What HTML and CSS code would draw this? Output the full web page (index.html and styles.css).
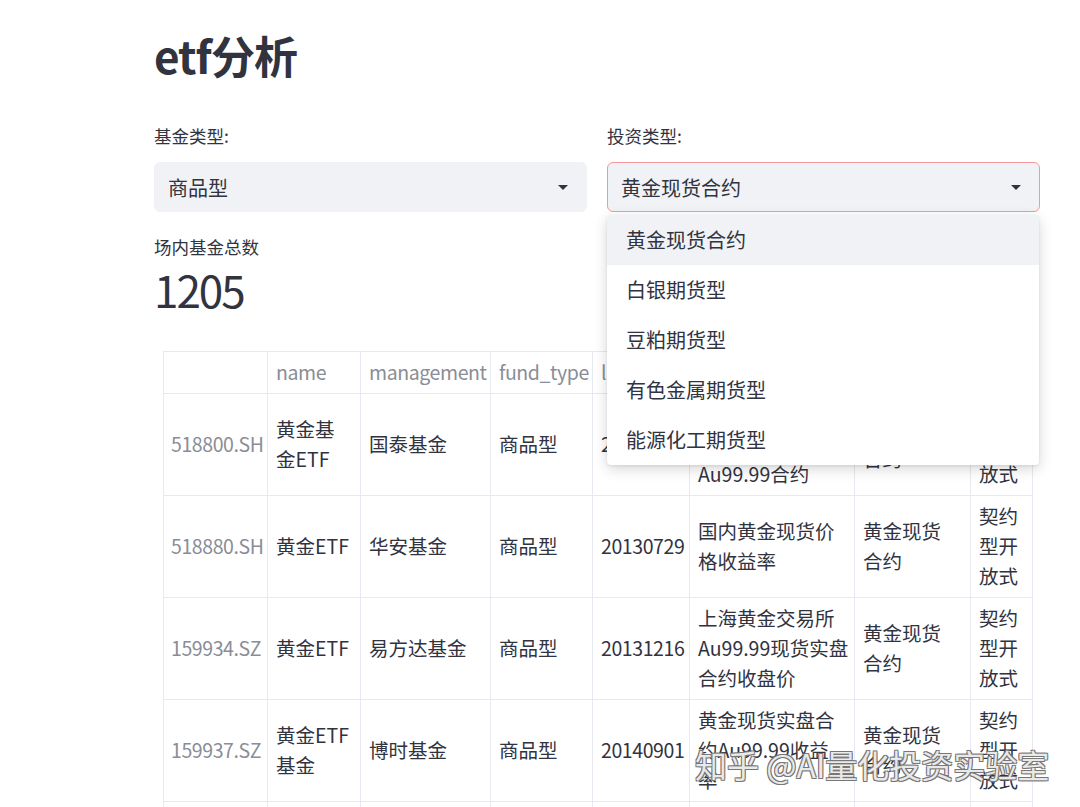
FILE: index.html
```html
<!DOCTYPE html>
<html lang="zh-CN">

<head>
    <meta charset="UTF-8">
    <meta name="viewport" content="width=device-width, initial-scale=1.0">
    <title>etf分析</title>
    <link rel="stylesheet" href="styles.css">
</head>

<body>
    <main class="page">
        <h1 class="title">etf分析</h1>

        <div class="filters">
            <div class="field">
                <label class="field-label">基金类型:</label>
                <div class="select">
                    <span>商品型</span>
                    <span class="caret"></span>
                </div>
            </div>
            <div class="field">
                <label class="field-label">投资类型:</label>
                <div class="select focused">
                    <span>黄金现货合约</span>
                    <span class="caret"></span>
                </div>
                <ul class="menu">
                    <li class="active">黄金现货合约</li>
                    <li>白银期货型</li>
                    <li>豆粕期货型</li>
                    <li>有色金属期货型</li>
                    <li>能源化工期货型</li>
                </ul>
            </div>
        </div>

        <div class="metric">
            <div class="metric-label">场内基金总数</div>
            <div class="metric-value">1205</div>
        </div>

        <table class="data">
            <colgroup>
                <col class="c-index">
                <col class="c-name">
                <col class="c-mgmt">
                <col class="c-ftype">
                <col class="c-date">
                <col class="c-bench">
                <col class="c-itype">
                <col class="c-type">
            </colgroup>
            <thead>
                <tr>
                    <th></th>
                    <th>name</th>
                    <th>management</th>
                    <th>fund_type</th>
                    <th>list_date</th>
                    <th>benchmark</th>
                    <th>invest_type</th>
                    <th>type</th>
                </tr>
            </thead>
            <tbody>
                <tr>
                    <th>518800.SH</th>
                    <td>黄金基<br>金ETF</td>
                    <td>国泰基金</td>
                    <td>商品型</td>
                    <td>20130729</td>
                    <td>上海黄金交易所<br>黄金现货实盘<br>Au99.99合约</td>
                    <td>黄金现货<br>合约</td>
                    <td>契约<br>型开<br>放式</td>
                </tr>
                <tr>
                    <th>518880.SH</th>
                    <td>黄金ETF</td>
                    <td>华安基金</td>
                    <td>商品型</td>
                    <td>20130729</td>
                    <td>国内黄金现货价<br>格收益率</td>
                    <td>黄金现货<br>合约</td>
                    <td>契约<br>型开<br>放式</td>
                </tr>
                <tr>
                    <th>159934.SZ</th>
                    <td>黄金ETF</td>
                    <td>易方达基金</td>
                    <td>商品型</td>
                    <td>20131216</td>
                    <td>上海黄金交易所<br>Au99.99现货实盘<br>合约收盘价</td>
                    <td>黄金现货<br>合约</td>
                    <td>契约<br>型开<br>放式</td>
                </tr>
                <tr>
                    <th>159937.SZ</th>
                    <td>黄金ETF<br>基金</td>
                    <td>博时基金</td>
                    <td>商品型</td>
                    <td>20140901</td>
                    <td>黄金现货实盘合<br>约Au99.99收益<br>率</td>
                    <td>黄金现货<br>合约</td>
                    <td>契约<br>型开<br>放式</td>
                </tr>
                <tr>
                    <th>159812.SZ</th>
                    <td>黄金基<br>金ETF</td>
                    <td>前海开源基金</td>
                    <td>商品型</td>
                    <td>20200410</td>
                    <td>上海黄金交易所<br>黄金现货实盘<br>合约收益率</td>
                    <td>黄金现货<br>合约</td>
                    <td>契约<br>型开<br>放式</td>
                </tr>
            </tbody>
        </table>

        <div class="watermark">知乎 @AI量化投资实验室</div>
    </main>
</body>

</html>
```

FILE: styles.css
```css
html,
body {
    margin: 0;
    padding: 0;
    height: 807px;
    overflow: hidden;
    background: #ffffff;
}

body {
    font-family: "Noto Sans CJK SC", "Noto Sans", sans-serif;
    color: #31333f;
}

.page {
    position: relative;
    box-sizing: border-box;
    width: 1080px;
    height: 807px;
    padding: 25px 40px 0 154px;
}

.title {
    margin: 0;
    font-size: 44px;
    font-weight: 700;
    line-height: 60px;
    letter-spacing: -1px;
}

.filters {
    display: grid;
    grid-template-columns: 433px 433px;
    gap: 20px;
    margin-top: 39px;
}

.field {
    position: relative;
}

.field-label {
    display: block;
    font-size: 17.5px;
    line-height: 24px;
    color: #31333f;
}

.select {
    display: flex;
    align-items: center;
    justify-content: space-between;
    box-sizing: border-box;
    height: 50px;
    margin-top: 14px;
    padding: 0 18px 0 13px;
    background: #f0f2f6;
    border: 1px solid #f0f2f6;
    border-radius: 6px;
    font-size: 20px;
}

.select.focused {
    border-color: #f29a9a;
}

.caret {
    width: 0;
    height: 0;
    border-left: 5px solid transparent;
    border-right: 5px solid transparent;
    border-top: 5px solid #31333f;
}

.menu {
    position: absolute;
    z-index: 5;
    left: 0;
    top: 91px;
    width: 432px;
    margin: 0;
    padding: 0;
    list-style: none;
    background: #ffffff;
    border-radius: 4px;
    box-shadow: 0 4px 14px rgba(0, 0, 0, 0.16), 0 1px 3px rgba(0, 0, 0, 0.08);
    overflow: hidden;
}

.menu li {
    height: 50px;
    padding-left: 19px;
    line-height: 50px;
    font-size: 20px;
    color: #31333f;
}

.menu li.active {
    background: #f0f2f6;
}

.metric {
    margin-top: 23px;
}

.metric-label {
    font-size: 17.5px;
    line-height: 24px;
}

.metric-value {
    margin-top: 4px;
    font-size: 44px;
    line-height: 52px;
    font-weight: 400;
    letter-spacing: -2px;
}

.data {
    margin: 36px 0 0 9px;
    width: 869px;
    table-layout: fixed;
    border-collapse: collapse;
    font-size: 19.5px;
}

.c-index { width: 104px; }
.c-name { width: 93px; }
.c-mgmt { width: 130px; }
.c-ftype { width: 102px; }
.c-date { width: 97px; }
.c-bench { width: 165px; }
.c-itype { width: 116px; }
.c-type { width: 62px; }

.data th,
.data td {
    padding: 5px 8px 6px;
    line-height: 30px;
    border: 1px solid #e6e9ef;
    text-align: left;
    vertical-align: middle;
    white-space: nowrap;
    font-weight: 400;
}

.data thead th,
.data tbody th {
    color: #8a8d97;
}

.data thead th {
    letter-spacing: -0.4px;
}

.data tbody th {
    padding-left: 7px;
    letter-spacing: -0.4px;
}

.data td:nth-child(5) {
    letter-spacing: -0.4px;
}

.watermark {
    position: absolute;
    left: 695px;
    top: 744px;
    font-size: 32px;
    line-height: 40px;
    color: rgba(255, 255, 255, 0.85);
    text-shadow: 1px 1px 0 #777, -1px -1px 0 #777, 1px -1px 0 #777, -1px 1px 0 #777;
    white-space: nowrap;
}
```
